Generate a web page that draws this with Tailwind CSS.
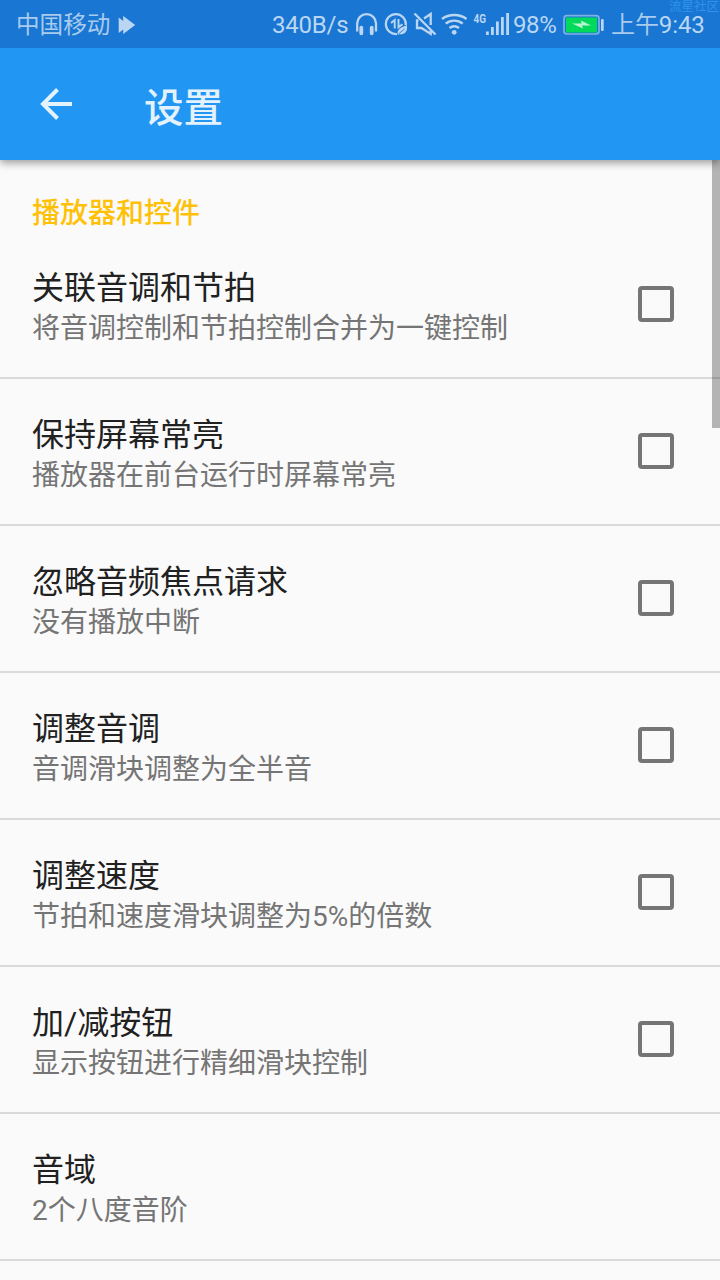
<!DOCTYPE html>
<html lang="zh-CN">
<head>
<meta charset="utf-8">
<title>设置</title>
<script src="https://cdn.jsdelivr.net/npm/@tailwindcss/browser@4"></script>
</head>
<body class="bg-[#fafafa]">
<div class="relative w-[720px] h-[1280px] overflow-hidden bg-[#fafafa] font-['Roboto','Noto_Sans_CJK_SC',sans-serif]">
  <header class="relative z-10 shadow-[0_3px_8px_rgba(0,0,0,0.38)]">
    <div class="flex h-12 items-center bg-[#1976d2] text-[#bad6f2] text-2xl leading-[48px] whitespace-nowrap">
      <div class="ml-4 w-[97px] pt-[3px] text-[23.6px] leading-[45px] text-[#a9cbee]">中国移动</div>
      <svg class="ml-[5px] w-[18px] h-12 shrink-0" viewBox="118 0 18 48" fill="currentColor"><path d="M118.700 17.500l4.500 3.500v-5l12 9-12 9v-4.500l-4.500 3.500z"/></svg>
      <div class="ml-[136px] w-[77px] pt-[3px] leading-[45px] tracking-[-0.2px]">340B/s</div>
      <svg class="ml-[6px] w-[25px] h-12 shrink-0" viewBox="355 0 25 48" fill="none" stroke="currentColor" stroke-width="2.300"><path d="M357.200 31.500v-8a9.400 9.400 0 0 1 18.800 0v8"/><path d="M361.300 27.700v5.600M371.700 27.700v5.600" stroke-width="3.800" stroke-linecap="round"/></svg>
      <svg class="ml-[4px] w-[25px] h-12 shrink-0" viewBox="384 0 25 48" fill="none" stroke="currentColor" stroke-width="2.200"><path d="M397 34A10 10 0 1 1 405.800 25"/><path d="M394.700 28.500v-8.500l-3.700 3M398.500 19v8.300l4-3" stroke-width="1.900"/><path d="M407 25v3c0 5-4 7-7.500 6l-1 1-1-1c0-6 5-7 9.500-9z" fill="currentColor" stroke="none"/><path d="M398.500 34l6-5" stroke="#1976d2" stroke-width=".8"/></svg>
      <svg class="ml-[4px] w-[25px] h-12 shrink-0" viewBox="413 0 25 48" fill="none" stroke="currentColor" stroke-width="2.300"><path d="M414.500 13.500l21 21M424 18.500l6.700-4.500v11M418.500 20.500H417v7.500h4.500l9.200 6v-4"/></svg>
      <svg class="ml-[3px] w-[27px] h-12 shrink-0" viewBox="441 0 27 48" fill="none" stroke="currentColor" stroke-width="2.400"><path d="M442 19c7-5.300 17.500-5.300 24.500 0M445.700 23.600c5-4 12-4 17 0M449.500 28c3-2.300 6.500-2.300 9.500 0"/><circle cx="454.2" cy="32.300" r="2.400" fill="currentColor" stroke="none"/></svg>
      <svg class="ml-[5px] w-[37px] h-12 shrink-0" viewBox="473 0 37 48" fill="currentColor"><text x="473.500" y="23" font-size="13.500" font-weight="700" textLength="12.500" lengthAdjust="spacingAndGlyphs">4G</text><path d="M486 31.500h2.800V35H486zM491 27h2.800v8H491zM496 21.500h2.800V35H496zM501 17h2.800v18H501zM506.200 13h2.800v22h-2.800z"/></svg>
      <div class="ml-[3px] w-[45px] pt-[3px] leading-[45px] tracking-[-0.4px]">98%</div>
      <svg class="ml-[4px] w-[43px] h-12 shrink-0" viewBox="562 0 43 48"><rect x="564" y="15.700" width="35" height="18.300" rx="3" fill="none" stroke="#7fb1e5" stroke-width="1.700"/><rect x="566" y="17.500" width="31" height="15" fill="#00d95a"/><path d="M572 23.500l9.500 0-.5-3 10 5-9 0 1 3z" fill="#bdf3d4"/><rect x="601" y="19" width="2.700" height="12" rx="1" fill="#bad6f2"/></svg>
      <div class="ml-[6px] w-[96px] pt-[3px] leading-[45px] tracking-[-0.1px]"><span class="text-[#a9cbee]">上午</span>9:43</div>
    </div>
    <div class="flex h-28 items-center bg-[#2196f3] text-[#e4f2fe]">
      <svg class="ml-10 w-8 h-8 shrink-0" viewBox="0 0 32 32" fill="none" stroke="currentColor" stroke-width="4"><path d="M17.500 1.500L3 16l14.500 14.500M3 16h29"/></svg>
      <h1 class="ml-[72px] pt-[10px] text-[39.5px] leading-[56px] font-medium">设置</h1>
    </div>
    <div class="absolute top-0 right-0 w-[51px] text-[12.500px] leading-[13px] text-[#2f94ee] whitespace-nowrap">流星社区</div>
  </header>
  <main>
    <h2 class="h-[72px] pl-8 pt-[34px] text-[28px] leading-[40px] font-medium text-[#ffc107]">播放器和控件</h2>
    <ul id="list"></ul>
  </main>
  <div class="absolute right-0 top-[160px] w-2 h-[268px] bg-black/28"></div>
</div>
<template id="row">
  <li class="flex h-[147px] items-start justify-between border-b-2 border-[#dadada] pl-8 pr-[46px]">
    <div class="pt-[35px]">
      <div class="title text-[32px] leading-[42px] text-[#212121]"></div>
      <div class="sub text-[28px] leading-[40px] text-[#757575]"></div>
    </div>
    <span class="box mt-[54px] size-9 rounded-[4px] border-4 border-[#757575]"></span>
  </li>
</template>
<script>
  const rows = [
    ["关联音调和节拍", "将音调控制和节拍控制合并为一键控制", true],
    ["保持屏幕常亮", "播放器在前台运行时屏幕常亮", true],
    ["忽略音频焦点请求", "没有播放中断", true],
    ["调整音调", "音调滑块调整为全半音", true],
    ["调整速度", "节拍和速度滑块调整为5%的倍数", true],
    ["加/减按钮", "显示按钮进行精细滑块控制", true],
    ["音域", "2个八度音阶", false]
  ];
  const list = document.getElementById("list");
  for (const [title, sub, check] of rows) {
    const row = document.getElementById("row").content.cloneNode(true);
    row.querySelector(".title").textContent = title;
    row.querySelector(".sub").textContent = sub;
    if (!check) row.querySelector(".box").remove();
    list.append(row);
  }
</script>
</body>
</html>
